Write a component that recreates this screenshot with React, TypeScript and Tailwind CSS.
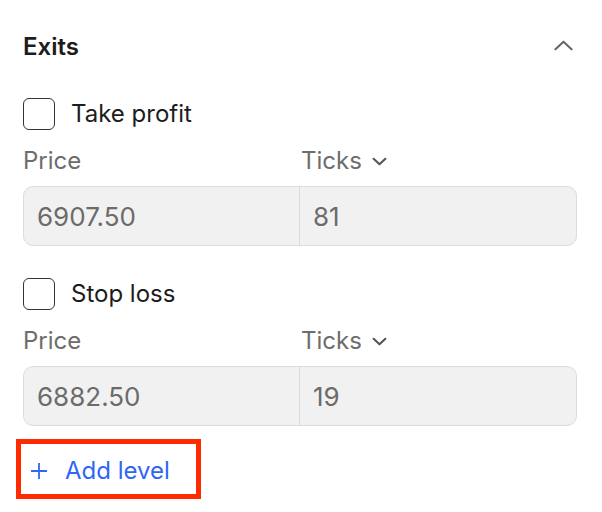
import React, { useState } from "react";

function ChevronUp({ className }: { className?: string }) {
  return (
    <svg viewBox="0 0 20 11" className={className} fill="none" stroke="currentColor" strokeWidth={2.2} strokeLinecap="round" strokeLinejoin="round">
      <path d="M1.5 9.5 L10 1.5 L18.5 9.5" />
    </svg>
  );
}

function ChevronDown({ className }: { className?: string }) {
  return (
    <svg viewBox="0 0 14 8" className={className} fill="none" stroke="currentColor" strokeWidth={2} strokeLinecap="round" strokeLinejoin="round">
      <path d="M1.5 1.5 L7 6.5 L12.5 1.5" />
    </svg>
  );
}

function ExitLevel({ label, price, ticks }: { label: string; price: string; ticks: string }) {
  const [checked, setChecked] = useState(false);

  return (
    <div>
      {/* Checkbox row */}
      <label className="flex items-center h-8 cursor-pointer">
        <button
          type="button"
          onClick={() => setChecked(!checked)}
          className={`w-8 h-8 rounded-[6px] border-[1.5px] border-[#333] ${checked ? "bg-[#2f66f6] border-[#2f66f6]" : "bg-white"}`}
        />
        <span className="ml-4 text-[24px] leading-8 text-[#1c1c1c]">{label}</span>
      </label>

      {/* Labels */}
      <div className="grid grid-cols-2 mt-[15px] h-8 text-[24px] leading-8 text-[#6d6d6d]">
        <span>Price</span>
        <span className="flex items-center gap-[10px] pl-[1px]">
          Ticks <ChevronDown className="w-[15px] h-[9px] text-[#555]" />
        </span>
      </div>

      {/* Inputs */}
      <div className="grid grid-cols-2 mt-[9px] h-[60px] rounded-[10px] border border-[#dcdcdc] bg-[#f1f1f1] text-[26px] text-[#6b6b6b]">
        <div className="flex items-center px-[13px] border-r border-[#dcdcdc]">{price}</div>
        <div className="flex items-center px-[13px]">{ticks}</div>
      </div>
    </div>
  );
}

export default function App() {
  return (
    <div className="w-[602px] h-[512px] bg-white pl-[23px] pr-[25px] pt-[31px] overflow-hidden" style={{ fontFamily: "Inter, 'Liberation Sans', sans-serif" }}>
      {/* Header */}
      <div className="flex items-center justify-between h-8">
        <h2 className="text-[24px] leading-8 font-semibold text-[#1c1c1c]">Exits</h2>
        <ChevronUp className="w-[19px] h-[11px] text-[#666] mr-[4px] -mt-[4px]" />
      </div>

      <div className="mt-[35px]">
        <ExitLevel label="Take profit" price="6907.50" ticks="81" />
      </div>
      <div className="mt-[32px]">
        <ExitLevel label="Stop loss" price="6882.50" ticks="19" />
      </div>

      {/* Add level */}
      <button className="mt-[13px] -ml-[7px] w-[185px] h-[60px] border-[5px] border-[#ff2a00] flex items-center pl-[10px] pt-[3px] text-[#2f66f6] text-[24px] leading-8">
        <svg viewBox="0 0 16 16" className="w-4 h-4" fill="none" stroke="currentColor" strokeWidth={1.8}>
          <path d="M8 0 V16 M0 8 H16" />
        </svg>
        <span className="ml-[18px]">Add level</span>
      </button>
    </div>
  );
}
